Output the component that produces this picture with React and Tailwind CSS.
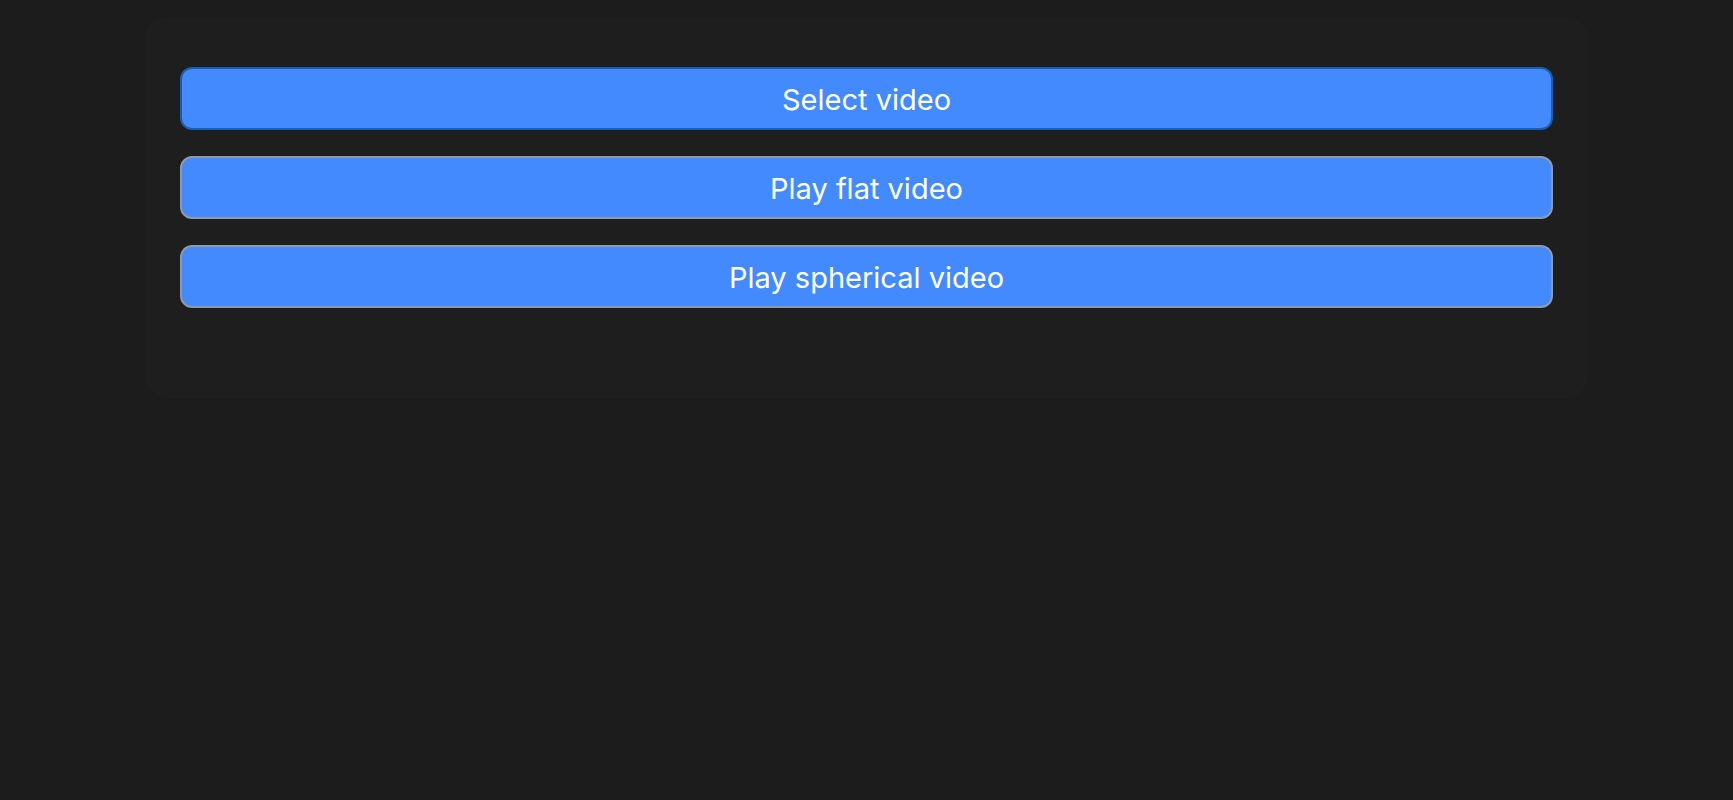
import React from 'react';

const buttons = [
    { label: 'Select video', focused: true },
    { label: 'Play flat video', focused: false },
    { label: 'Play spherical video', focused: false },
];

export default function App() {
    return (
        <div className="min-h-[800px] w-full bg-[#1c1c1c] pt-[18px] font-['Inter','Noto_Sans',sans-serif]">
            <div className="mx-auto w-[1443px] h-[379px] rounded-[20px] bg-[#1e1e1e] px-[35px] pt-[49px] flex flex-col gap-[26px]">
                {buttons.map((b) => (
                    <button
                        key={b.label}
                        className={`h-[63px] w-full rounded-[12px] bg-[#448aff] text-white text-[29px] leading-none pt-[1px] border-2 ${b.focused ? 'border-[#1a5fae]' : 'border-[#8f9aa8]'}`}
                    >
                        {b.label}
                    </button>
                ))}
            </div>
        </div>
    );
}
